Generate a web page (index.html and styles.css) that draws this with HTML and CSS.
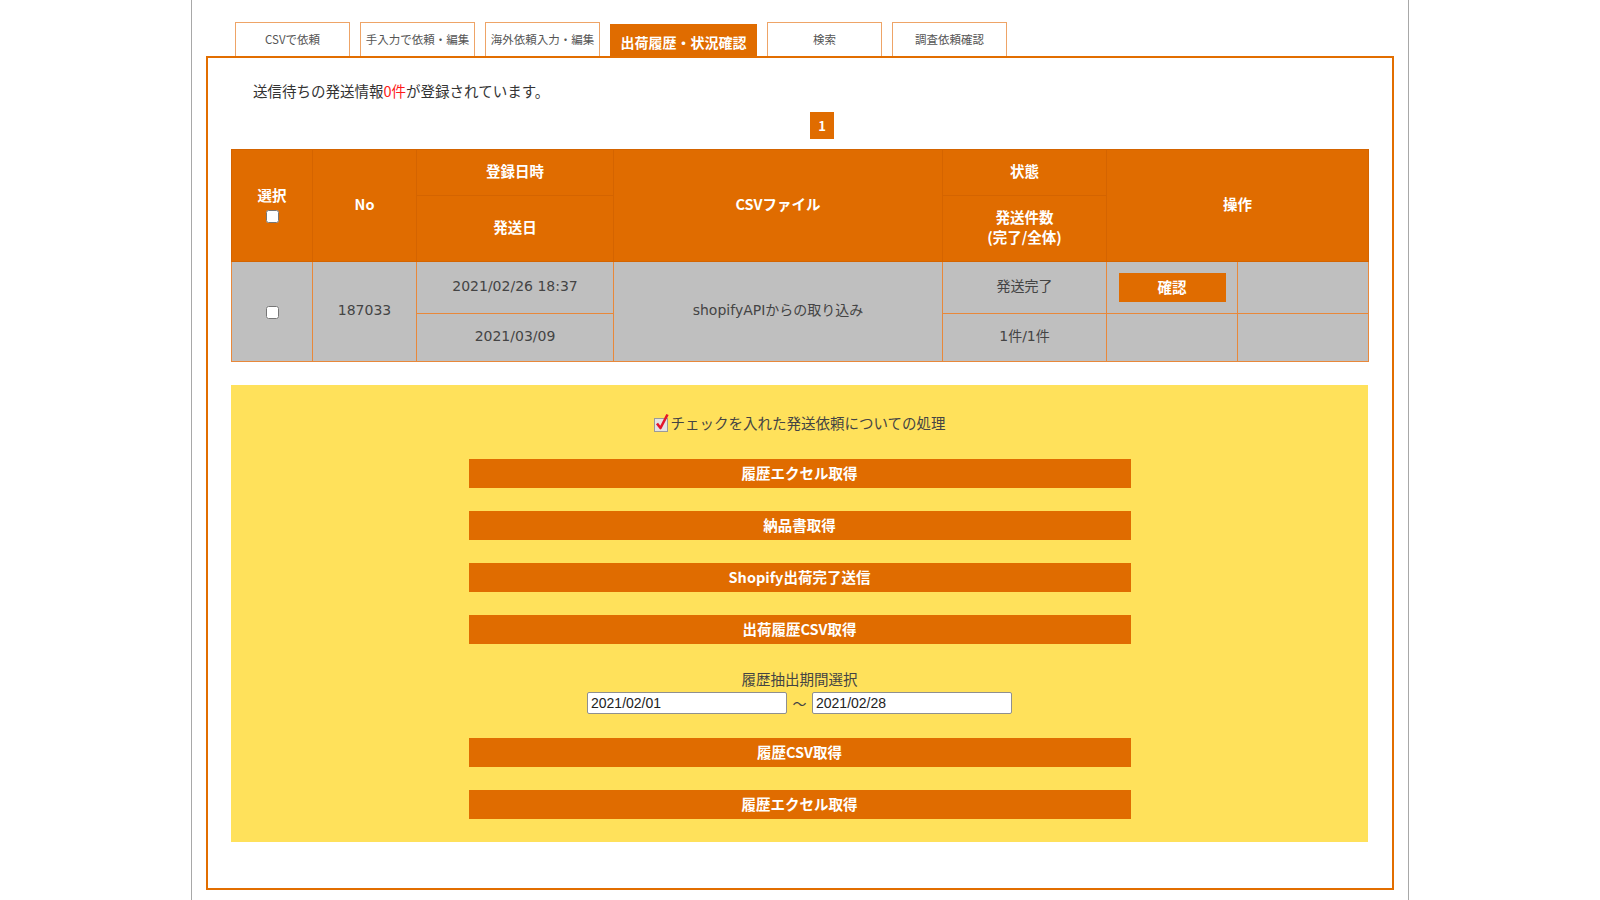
FILE: index.html
```html
<!DOCTYPE html>
<html lang="ja">
<head>
<meta charset="utf-8">
<title>出荷履歴・状況確認</title>
<link rel="stylesheet" href="styles.css">
</head>
<body>
<div class="page">
  <div class="tabs">
    <div class="tab">CSVで依頼</div>
    <div class="tab">手入力で依頼・編集</div>
    <div class="tab">海外依頼入力・編集</div>
    <div class="tab active">出荷履歴・状況確認</div>
    <div class="tab">検索</div>
    <div class="tab">調査依頼確認</div>
  </div>
  <div class="box">
    <p class="notice">送信待ちの発送情報<span class="red">0件</span>が登録されています。</p>
    <div class="pager"><span class="page-num">1</span></div>
    <table class="list">
      <colgroup>
        <col style="width:81px"><col style="width:104px"><col style="width:197px"><col style="width:329px"><col style="width:164px"><col style="width:131px"><col style="width:131px">
      </colgroup>
      <thead>
        <tr class="h1">
          <th rowspan="2"><div class="sel">選択<input type="checkbox" class="cb"></div></th>
          <th rowspan="2">No</th>
          <th>登録日時</th>
          <th rowspan="2">CSVファイル</th>
          <th>状態</th>
          <th rowspan="2" colspan="2">操作</th>
        </tr>
        <tr class="h2">
          <th>発送日</th>
          <th>発送件数<br>(完了/全体)</th>
        </tr>
      </thead>
      <tbody>
        <tr class="b1">
          <td rowspan="2"><input type="checkbox" class="cb"></td>
          <td rowspan="2">187033</td>
          <td>2021/02/26 18:37</td>
          <td rowspan="2">shopifyAPIからの取り込み</td>
          <td>発送完了</td>
          <td><button class="confirm">確認</button></td>
          <td></td>
        </tr>
        <tr class="b2">
          <td>2021/03/09</td>
          <td>1件/1件</td>
          <td></td>
          <td></td>
        </tr>
      </tbody>
    </table>

    <div class="panel">
      <div class="panel-head">
        <svg class="chk" width="17" height="20" viewBox="0 0 17 20"><rect x="1.5" y="5.5" width="13" height="13" fill="#e4e4e4" stroke="#9a9a9a"/><path d="M4 10.5 L7.5 15 L14.5 1.5" stroke="#e3162c" stroke-width="2.6" fill="none" stroke-linejoin="round"/></svg><span>チェックを入れた発送依頼についての処理</span>
      </div>
      <button class="wide">履歴エクセル取得</button>
      <button class="wide">納品書取得</button>
      <button class="wide">Shopify出荷完了送信</button>
      <button class="wide">出荷履歴CSV取得</button>
      <div class="period">
        <div class="period-label">履歴抽出期間選択</div>
        <div class="period-inputs">
          <input type="text" class="date" value="2021/02/01">
          <span class="tilde">～</span>
          <input type="text" class="date" value="2021/02/28">
        </div>
      </div>
      <button class="wide">履歴CSV取得</button>
      <button class="wide">履歴エクセル取得</button>
    </div>
  </div>
</div>
</body>
</html>
```

FILE: styles.css
```css
* { box-sizing: border-box; }
html, body { margin: 0; padding: 0; background: #fff; }
body {
  font-family: "Noto Sans CJK JP", "Noto Sans", sans-serif;
  color: #444;
}
.page {
  width: 1218px;
  min-height: 900px;
  margin: 0 auto;
  border-left: 1px solid #a8a8a8;
  border-right: 1px solid #a8a8a8;
  padding: 22px 14px 0 14px;
}
.tabs {
  display: flex;
  align-items: flex-end;
  gap: 10px;
  height: 34px;
  padding-left: 29px;
}
.tab {
  width: 115px;
  height: 34px;
  border: 1px solid #eea467;
  border-bottom: none;
  display: flex;
  align-items: center;
  justify-content: center;
  font-size: 11.5px;
  color: #555;
  padding-bottom: 1px;
  background: #fff;
}
.tab.active {
  width: 147px;
  height: 32px;
  background: #e06c00;
  border-color: #e06c00;
  color: #fff;
  font-weight: bold;
  font-size: 14px;
  padding-top: 2px;
  padding-bottom: 0;
}
.box {
  border: 2px solid #e26e00;
  padding: 23px 23px 45px 23px;
  height: 834px;
}
.notice {
  margin: 0 0 0 22px;
  font-size: 14.5px;
  line-height: 20px;
  color: #333;
}
.red { color: #ff1a1a; }
.pager {
  display: flex;
  justify-content: center;
  margin-top: 11px;
  padding-left: 44px;
}
.page-num {
  width: 24px;
  height: 27px;
  background: #e06c00;
  color: #fff;
  font-weight: bold;
  font-size: 13px;
  display: flex;
  align-items: center;
  justify-content: center;
}
.list {
  margin-top: 10px;
  width: 1137px;
  border-collapse: collapse;
  table-layout: fixed;
  font-size: 14.5px;
}
.list th {
  background: #e06c00;
  color: #fff;
  font-weight: bold;
  border: 1px solid #d46400;
  text-align: center;
  vertical-align: middle;
  padding: 0 0 4px 0;
  line-height: 20px;
}
.list td {
  background: #bfbfbf;
  color: #444;
  border: 1px solid #e8883a;
  text-align: center;
  vertical-align: middle;
  padding: 0 0 3px 0;
  line-height: 20px;
  font-family: "DejaVu Sans", "Noto Sans CJK JP", sans-serif;
  font-size: 14px;
}
.h1 { height: 46px; }
.h2 { height: 66px; }
.b1 { height: 52px; }
.b2 { height: 48px; }
.sel {
  display: flex;
  flex-direction: column;
  align-items: center;
}
.cb {
  width: 13px;
  height: 13px;
  margin: 5px 0 0 0;
}
.list td .cb { margin: 3px 0 0 0; vertical-align: middle; }
.confirm {
  width: 107px;
  height: 29px;
  border: none;
  background: #e06c00;
  color: #fff;
  font-family: "Noto Sans CJK JP", sans-serif;
  font-weight: bold;
  font-size: 14.5px;
  padding: 0 0 2px 0;
  display: block;
  margin: 2px auto 0 auto;
}
.panel {
  margin-top: 23px;
  width: 1137px;
  background: #ffe15b;
  padding: 28px 0 23px 0;
  display: flex;
  flex-direction: column;
  align-items: center;
}
.panel-head {
  display: flex;
  align-items: flex-end;
  height: 20px;
  font-size: 14.5px;
  line-height: 20px;
  color: #444;
  margin-bottom: 26px;
}
.chk { margin-right: 0; }
.wide {
  width: 662px;
  height: 29px;
  border: none;
  background: #e06c00;
  color: #fff;
  font-family: inherit;
  font-weight: bold;
  font-size: 14.5px;
  padding: 0 0 3px 0;
  margin: 0 0 23px 0;
}
.period {
  margin-top: 2px;
  display: flex;
  flex-direction: column;
  align-items: center;
  margin-bottom: 24px;
}
.period-label {
  font-size: 14.5px;
  line-height: 20px;
  color: #444;
}
.period-inputs {
  display: flex;
  align-items: center;
  margin-top: 3px;
  gap: 4px;
}
.date {
  width: 200px;
  height: 22px;
  border: 1px solid #8f8f8f;
  border-radius: 2px;
  padding: 0 3px;
  font-family: "Liberation Sans", Arial, sans-serif;
  font-size: 14px;
  color: #222;
  background: #fff;
}
.tilde {
  font-size: 14px;
  color: #444;
  width: 17px;
  text-align: center;
}
.panel .wide:last-child { margin-bottom: 0; }
```
